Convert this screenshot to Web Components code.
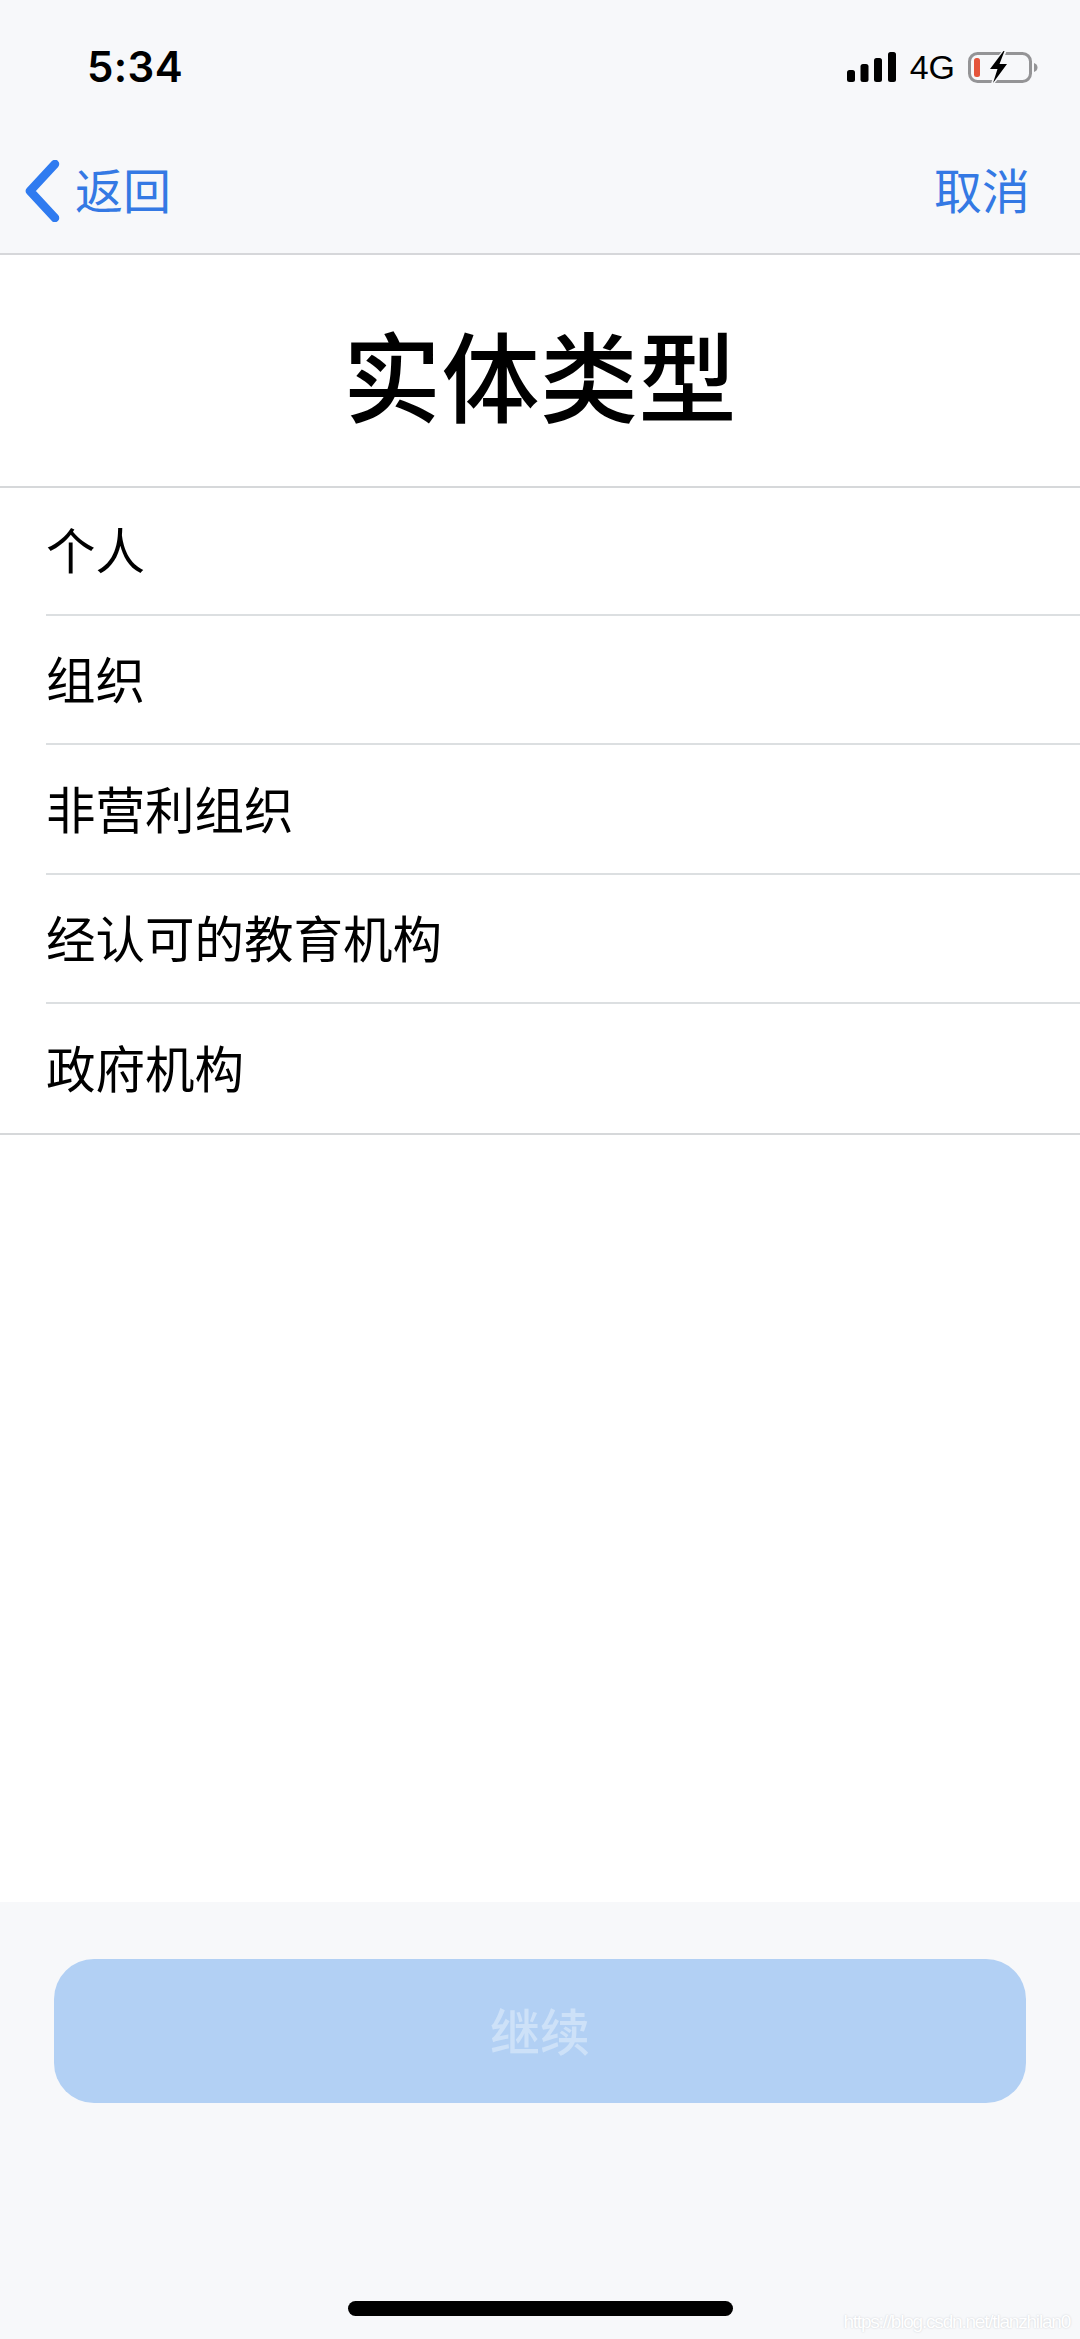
<!DOCTYPE html>
<html lang="zh-CN">
<head>
<meta charset="utf-8">
<title>实体类型</title>
<style>
	html, body { margin: 0; height: 100%; }
	body {
		display: flex;
		flex-direction: column;
		width: 1080px;
		height: 2339px;
		overflow: hidden;
		background: #fff;
		font-family: "Liberation Sans", "Noto Sans CJK SC", sans-serif;
	}
</style>
</head>
<body>
	<top-bar>
		<span slot="back">返回</span>
		<span slot="action">取消</span>
	</top-bar>
	<page-title>实体类型</page-title>
	<option-list>
		<option-row>个人</option-row>
		<option-row>组织</option-row>
		<option-row>非营利组织</option-row>
		<option-row>经认可的教育机构</option-row>
		<option-row>政府机构</option-row>
	</option-list>
	<bottom-bar>
		<span slot="label">继续</span>
		<span slot="mark">https://blog.csdn.net/tlanzhilan0</span>
	</bottom-bar>

<script>
const CJK = `"Noto Sans CJK SC", sans-serif`;

class TopBar extends HTMLElement
{
	constructor() {
		super();
		this.attachShadow({mode: 'open'}).innerHTML = `
			<style>
				:host {
					display: block;
					flex: none;
					height: 253px;
					background: #f7f8fa;
					border-bottom: 2px solid #d6d7da;
				}
				#status {
					display: flex;
					align-items: center;
					height: 134px;
					padding: 0 41px 0 87px;
					box-sizing: border-box;
				}
				#time {
					font: 600 42px/1 Inter, "Liberation Sans", sans-serif;
					letter-spacing: .4px;
					color: #000;
				}
				#status svg { display: block; }
				#signal { margin-left: auto; }
				#net {
					font: 400 34px/1 "Liberation Sans", sans-serif;
					color: #000;
					margin: 0 13px 0 14px;
				}
				#nav {
					display: flex;
					align-items: center;
					height: 112px;
					padding: 0 50px 12px 25px;
					box-sizing: border-box;
					margin-top: 4px;
					font: 400 48px/1 ${CJK};
					color: #3479e4;
				}
				#back { display: flex; align-items: center; gap: 15px; }
				#chev { margin-top: 5px; }
				#nav ::slotted([slot=action]) { margin-left: auto; }
			</style>
			<div id="status">
				<span id="time">5:34</span>
				<svg id="signal" width="49" height="30" viewBox="0 0 49 30" fill="#000">
					<rect x="0" y="18" width="8" height="12" rx="2.5"/>
					<rect x="13.500" y="12" width="8" height="18" rx="2.500"/>
					<rect x="27" y="6" width="8" height="24" rx="2.500"/>
					<rect x="41" y="0" width="8" height="30" rx="2.500"/>
				</svg>
				<span id="net">4G</span>
				<svg width="71" height="34" viewBox="0 0 71 34">
					<rect x="1.500" y="3.500" width="61" height="28" rx="8" fill="none" stroke="#949496" stroke-width="3"/>
					<rect x="6" y="8" width="6" height="19" rx="2.500" fill="#e5553c"/>
					<path d="M66 13c2 .6 3.500 2.200 3.500 4.500S68 21.400 66 22z" fill="#949496"/>
					<path d="M35 0 19 20h8l-4 14 3 0 17-21h-9l5-13z" fill="#f7f8fa"/>
					<path d="M35.500 1 22 19h7.500l-4.500 14 14-19h-7.500l5-13z" fill="#000"/>
				</svg>
			</div>
			<div id="nav">
				<span id="back">
					<svg id="chev" width="35" height="62" viewBox="0 0 35 62">
						<path d="M30 4 5 31l25 27" fill="none" stroke="#2f7bf0" stroke-width="8.500" stroke-linecap="round" stroke-linejoin="round"/>
					</svg>
					<slot name="back"></slot>
				</span>
				<slot name="action"></slot>
			</div>
		`;
	}
}

class PageTitle extends HTMLElement
{
	constructor() {
		super();
		this.attachShadow({mode: 'open'}).innerHTML = `
			<style>
				:host {
					display: flex;
					flex: none;
					align-items: center;
					justify-content: center;
					height: 231px;
					font: 500 98px/1 ${CJK};
					letter-spacing: .5px;
					color: #000;
					box-sizing: border-box;
					padding-top: 3px;
				}
			</style>
			<slot></slot>
		`;
	}
}

class OptionList extends HTMLElement
{
	constructor() {
		super();
		this.attachShadow({mode: 'open'}).innerHTML = `
			<style>
				:host {
					display: flex;
					flex: none;
					flex-direction: column;
					border-top: 2px solid #d6d8da;
					border-bottom: 2px solid #d6d8da;
				}
			</style>
			<slot></slot>
		`;
	}
}

class OptionRow extends HTMLElement
{
	constructor() {
		super();
		this.attachShadow({mode: 'open'}).innerHTML = `
			<style>
				:host {
					display: block;
					padding-left: 46px;
					font: 400 49.500px/1 ${CJK};
					color: #000;
				}
				#inner {
					display: flex;
					align-items: center;
					box-sizing: border-box;
					height: 129.400px;
					padding-bottom: 3px;
					border-bottom: 2px solid #dcdfe1;
				}
				:host(:first-child) #inner { height: 128px; padding-bottom: 4px; }
				:host(:last-child) #inner { border-bottom: 0; height: 128.800px; padding-bottom: 4px; }
			</style>
			<div id="inner"><slot></slot></div>
		`;
	}
}

class BottomBar extends HTMLElement
{
	constructor() {
		super();
		this.attachShadow({mode: 'open'}).innerHTML = `
			<style>
				:host {
					display: flex;
					flex-direction: column;
					align-items: center;
					position: relative;
					height: 437px;
					flex: none;
					margin-top: auto;
					background: #f7f8fa;
					box-sizing: border-box;
					padding-top: 57px;
				}
				#btn {
					display: flex;
					align-items: center;
					justify-content: center;
					box-sizing: border-box;
					width: 972px;
					height: 144px;
					padding-bottom: 5px;
					border-radius: 40px;
					background: #b2d0f4;
					color: #cde1f8;
					font: 500 50px/1 ${CJK};
				}
				#home {
					width: 385px;
					height: 15px;
					margin-top: 198px;
					border-radius: 7.500px;
					background: #000;
				}
				#mark {
					position: absolute;
					right: 10px;
					bottom: 8px;
					font: 400 19px/1 "Liberation Sans", sans-serif;
					letter-spacing: -1.200px;
					white-space: nowrap;
					color: #fff;
					text-shadow: 0 0 2px #c9ccd1;
				}
			</style>
			<div id="btn"><slot name="label"></slot></div>
			<div id="home"></div>
			<div id="mark"><slot name="mark"></slot></div>
		`;
	}
}

customElements.define('top-bar', TopBar);
customElements.define('page-title', PageTitle);
customElements.define('option-list', OptionList);
customElements.define('option-row', OptionRow);
customElements.define('bottom-bar', BottomBar);
</script>
</body>
</html>
